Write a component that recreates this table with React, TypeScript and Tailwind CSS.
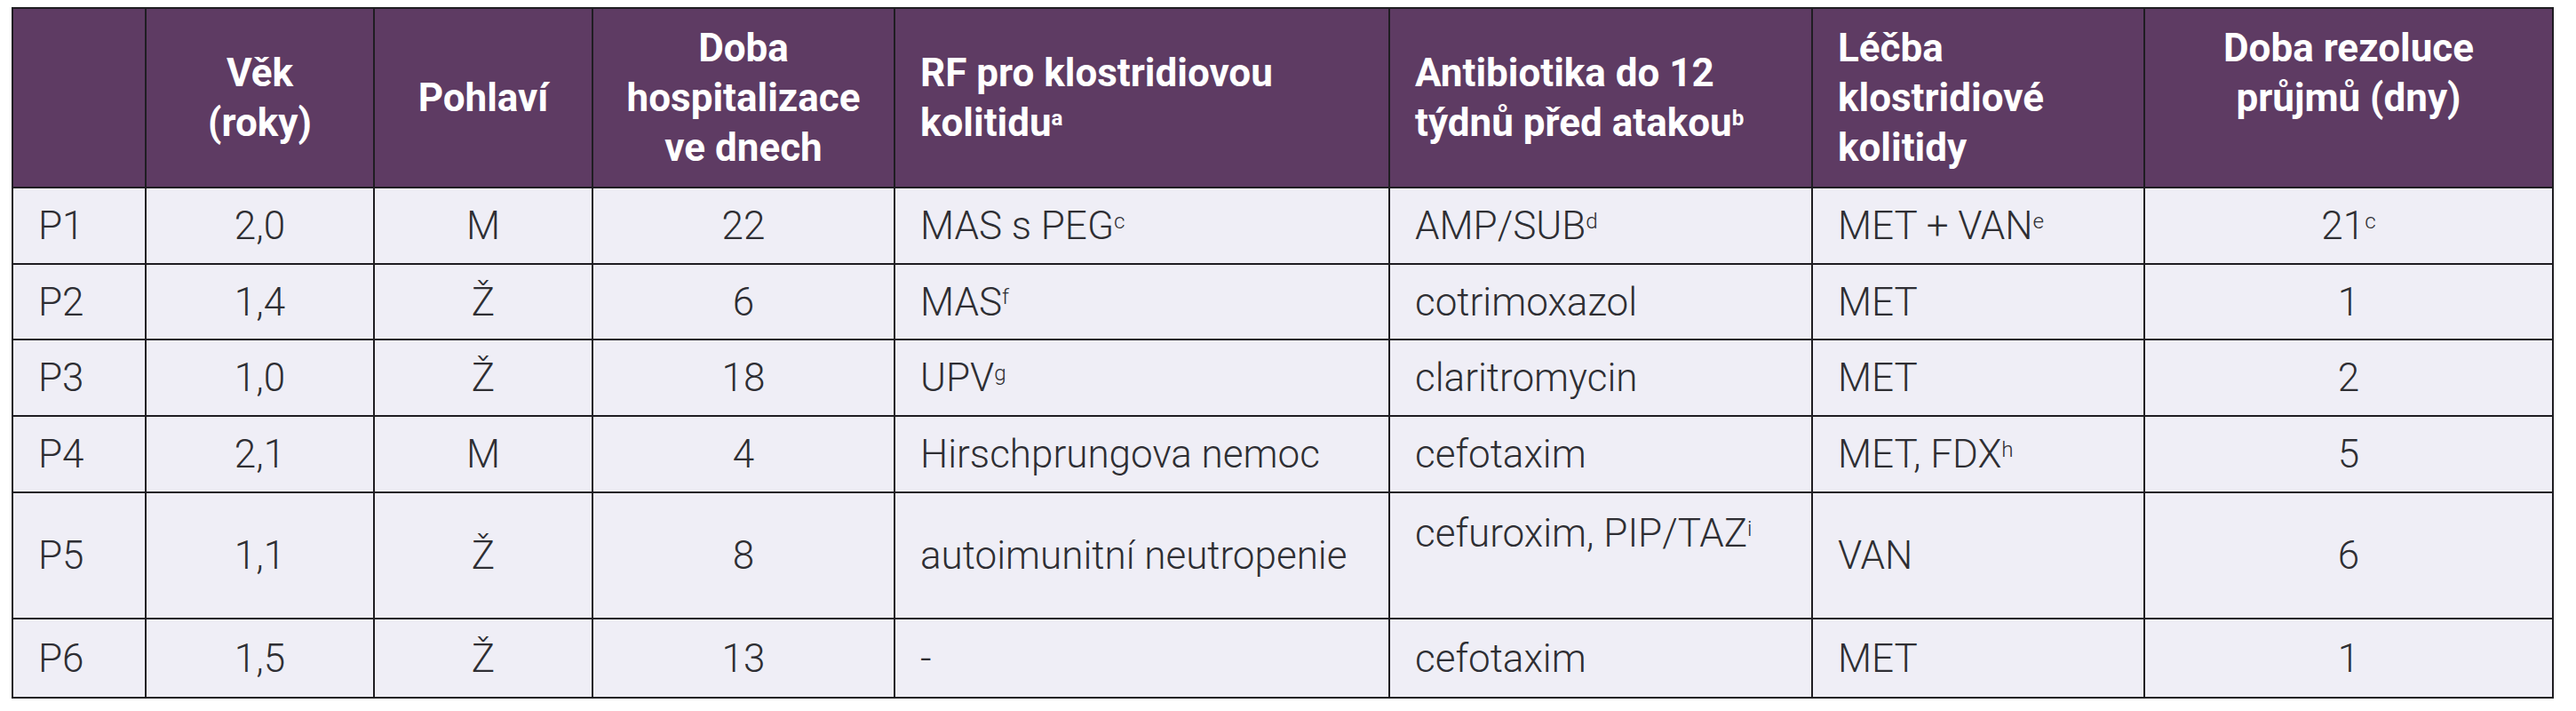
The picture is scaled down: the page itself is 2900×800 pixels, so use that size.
import React from 'react';

type Row = {
  id: string;
  age: string;
  sex: string;
  days: string;
  rf: React.ReactNode;
  ab: React.ReactNode;
  tx: React.ReactNode;
  res: React.ReactNode;
  h: string;
  abTop?: boolean;
};

const Sup = ({ children }: { children: React.ReactNode }) => (
  <sup className="text-[0.55em]">{children}</sup>
);

const rows: Row[] = [
  {
    id: 'P1', age: '2,0', sex: 'M', days: '22',
    rf: <>MAS s PEG<Sup>c</Sup></>,
    ab: <>AMP/SUB<Sup>d</Sup></>,
    tx: <>MET + VAN<Sup>e</Sup></>,
    res: <>21<Sup>c</Sup></>,
    h: 'h-[86px]',
  },
  {
    id: 'P2', age: '1,4', sex: 'Ž', days: '6',
    rf: <>MAS<Sup>f</Sup></>,
    ab: 'cotrimoxazol',
    tx: 'MET',
    res: '1',
    h: 'h-[85px]',
  },
  {
    id: 'P3', age: '1,0', sex: 'Ž', days: '18',
    rf: <>UPV<Sup>g</Sup></>,
    ab: 'claritromycin',
    tx: 'MET',
    res: '2',
    h: 'h-[86px]',
  },
  {
    id: 'P4', age: '2,1', sex: 'M', days: '4',
    rf: 'Hirschprungova nemoc',
    ab: 'cefotaxim',
    tx: <>MET, FDX<Sup>h</Sup></>,
    res: '5',
    h: 'h-[86px]',
  },
  {
    id: 'P5', age: '1,1', sex: 'Ž', days: '8',
    rf: 'autoimunitní neutropenie',
    ab: <>cefuroxim, PIP/TAZ<Sup>i</Sup></>,
    tx: 'VAN',
    res: '6',
    h: 'h-[142px]',
    abTop: true,
  },
  {
    id: 'P6', age: '1,5', sex: 'Ž', days: '13',
    rf: '-',
    ab: 'cefotaxim',
    tx: 'MET',
    res: '1',
    h: 'h-[89px]',
  },
];

const th = 'border-2 border-[#1f1d22] font-bold text-white align-middle';
const td = 'border-2 border-[#1f1d22] align-middle';

export default function App() {
  return (
    <div className="w-[2900px] h-[800px] bg-white pl-[13px] pt-[8px]">
      <table
        className="table-fixed border-collapse w-[2862px] text-[44px] leading-[56px]"
        style={{ fontFamily: 'Roboto, "Liberation Sans", sans-serif' }}
      >
        <colgroup>
          <col className="w-[150px]" />
          <col className="w-[257px]" />
          <col className="w-[246px]" />
          <col className="w-[340px]" />
          <col className="w-[557px]" />
          <col className="w-[476px]" />
          <col className="w-[374px]" />
          <col className="w-[460px]" />
        </colgroup>
        <thead>
          <tr className="h-[202px] bg-[#5e3b63]">
            <th className={th}></th>
            <th className={`${th} text-center`}>Věk<br />(roky)</th>
            <th className={`${th} text-center`}>Pohlaví</th>
            <th className={`${th} text-center`}>Doba<br />hospitalizace<br />ve dnech</th>
            <th className={`${th} text-left pl-7`}>RF pro klostridiovou<br />kolitidu<Sup>a</Sup></th>
            <th className={`${th} text-left pl-7`}>Antibiotika do 12<br />týdnů před atakou<Sup>b</Sup></th>
            <th className={`${th} text-left pl-7`}>Léčba<br />klostridiové<br />kolitidy</th>
            <th className={`${th} text-center !align-top pt-[16px]`}>Doba rezoluce<br />průjmů (dny)</th>
          </tr>
        </thead>
        <tbody className="bg-[#efeef6] text-[#2e2e33] font-light">
          {rows.map((r) => (
            <tr key={r.id} className={r.h}>
              <td className={`${td} text-left pl-7`}>{r.id}</td>
              <td className={`${td} text-center`}>{r.age}</td>
              <td className={`${td} text-center`}>{r.sex}</td>
              <td className={`${td} text-center`}>{r.days}</td>
              <td className={`${td} text-left pl-7`}>{r.rf}</td>
              <td className={`${td} text-left pl-7 ${r.abTop ? '!align-top pt-[17px]' : ''}`}>{r.ab}</td>
              <td className={`${td} text-left pl-7`}>{r.tx}</td>
              <td className={`${td} text-center`}>{r.res}</td>
            </tr>
          ))}
        </tbody>
      </table>
    </div>
  );
}
